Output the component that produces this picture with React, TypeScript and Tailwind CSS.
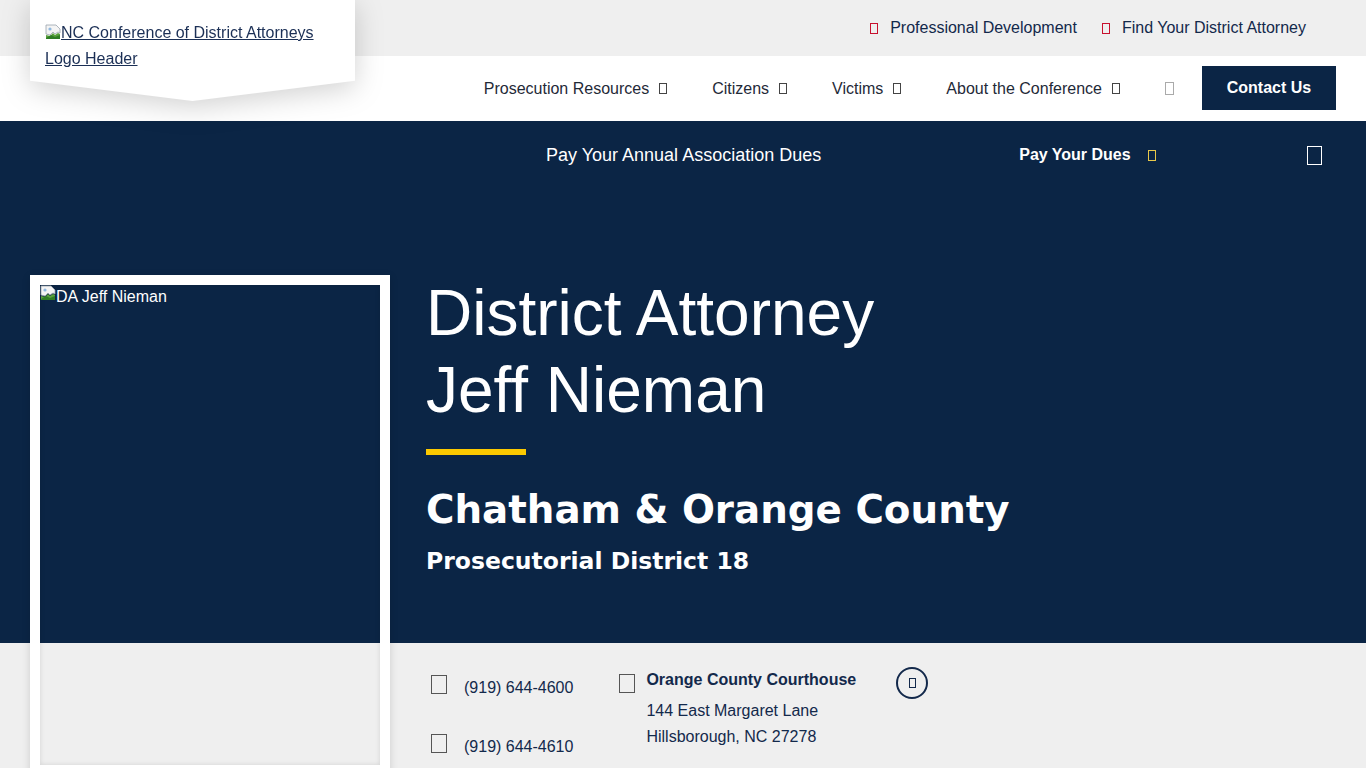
import React from 'react';

function Tofu({ className }: { className: string }) {
  return <span className={`inline-block shrink-0 border ${className}`} />;
}

function BrokenImg() {
  return (
    <svg viewBox="0 0 16 16" className="inline-block h-4 w-4 shrink-0 align-[-2px]">
      <path d="M1 1h10l4 4v4l-2-1-3 2-2-2-3 3-4-1z" fill="#f4f4f4" stroke="#9aa3ad" strokeWidth="0.8" />
      <path d="M1 11l4 1 3-3 2 2 3-2 2 1v5H1z" fill="#5aa13c" />
      <path d="M1 14l5-3 4 2 5-2v4H1z" fill="#2f7d24" />
      <circle cx="5" cy="5" r="1.6" fill="#8fb8e0" />
    </svg>
  );
}

function Logo() {
  return (
    <div className="absolute left-[30px] top-0 z-10 w-[325px] drop-shadow-[0_6px_14px_rgba(0,0,0,0.18)]">
      <div className="h-[101px] bg-white px-[15px] pt-[20px] [clip-path:polygon(0_0,100%_0,100%_80%,50%_100%,0_80%)]">
        <a href="#" className="text-[16px] leading-[26px] text-[#1b2f55] underline">
          <BrokenImg />
          NC Conference of District Attorneys Logo Header
        </a>
      </div>
    </div>
  );
}

function TopBar() {
  return (
    <div className="flex h-[56px] items-center justify-end gap-[25px] bg-[#efefef] pr-[60px] text-[16px] text-[#13294b]">
      <a href="#" className="flex items-center gap-[12px]">
        <Tofu className="h-[11px] w-[8px] border-[#c8102e]" />
        Professional Development
      </a>
      <a href="#" className="flex items-center gap-[12px]">
        <Tofu className="h-[11px] w-[8px] border-[#c8102e]" />
        Find Your District Attorney
      </a>
    </div>
  );
}

function NavBar() {
  const items = ['Prosecution Resources', 'Citizens', 'Victims', 'About the Conference'];
  return (
    <div className="flex h-[65px] items-center justify-end bg-white pr-[30px] text-[16px] text-[#1f2a38]">
      {items.map((t) => (
        <a key={t} href="#" className="mr-[45px] flex items-center gap-[10px]">
          {t}
          <Tofu className="h-[11px] w-[8px] border-[#444]" />
        </a>
      ))}
      <Tofu className="mr-[28px] h-[13px] w-[9px] border-[#aaa]" />
      <a
        href="#"
        className="-mt-[2px] flex h-[44px] w-[134px] items-center justify-center bg-[#0b2545] text-[16px] font-bold text-white"
      >
        Contact Us
      </a>
    </div>
  );
}

function PayBar() {
  return (
    <div className="flex h-[68px] items-center text-white">
      <div className="ml-[546px] text-[18px]">Pay Your Annual Association Dues</div>
      <a href="#" className="ml-[198px] flex items-center gap-[17px] text-[16px] font-bold">
        Pay Your Dues
        <Tofu className="h-[11px] w-[8px] border-[#e8c84a]" />
      </a>
      <Tofu className="ml-auto mr-[44px] h-[19px] w-[15px] border-white" />
    </div>
  );
}

function PhotoCard() {
  return (
    <div className="h-[500px] w-[360px] shrink-0 border-[10px] border-white shadow-[0_2px_8px_rgba(0,0,0,0.15)]">
      <div className="h-full w-full shadow-[inset_0_0_5px_rgba(0,0,0,0.12)]">
        <div className="flex items-start text-[16px] leading-[24px] text-white">
          <BrokenImg />
          <span>DA Jeff Nieman</span>
        </div>
      </div>
    </div>
  );
}

function Contacts() {
  return (
    <div className="flex pl-[5px] pt-[32px] text-[16px] text-[#13294b]">
      <div className="flex flex-col gap-[37px]">
        <div className="flex items-start gap-[17px]">
          <Tofu className="h-[19px] w-[16px] border-[#555]" />
          <span className="mt-[4px] leading-[18px]">(919) 644-4600</span>
        </div>
        <div className="flex items-start gap-[17px]">
          <Tofu className="h-[19px] w-[16px] border-[#555]" />
          <span className="mt-[4px] leading-[18px]">(919) 644-4610</span>
        </div>
      </div>
      <div className="ml-[46px] flex items-start gap-[11px]">
        <Tofu className="-mt-[1px] h-[19px] w-[16px] border-[#555]" />
        <div className="-mt-[8px] leading-[26px]">
          <div className="mb-[5px] font-bold">Orange County Courthouse</div>
          <div>144 East Margaret Lane</div>
          <div>Hillsborough, NC 27278</div>
        </div>
      </div>
      <div className="ml-[40px] -mt-[8px] flex h-[32px] w-[32px] items-center justify-center rounded-full border-2 border-[#13294b]">
        <Tofu className="h-[10px] w-[7px] border-[#13294b]" />
      </div>
    </div>
  );
}

export default function App() {
  return (
    <div className="min-h-[768px] overflow-hidden bg-[#efefef] font-['Liberation_Sans',Arial,sans-serif]">
      <header className="relative">
        <Logo />
        <TopBar />
        <NavBar />
      </header>
      <section className="bg-[linear-gradient(to_bottom,#0b2545_0,#0b2545_522px,#efefef_522px)]">
        <PayBar />
        <div className="mt-[86px] flex pl-[30px]">
          <PhotoCard />
          <div className="ml-[36px] flex-1">
            <div className="h-[368px] text-white">
              <h1 className="text-[64px] leading-[77px]">
                District Attorney
                <br />
                Jeff Nieman
              </h1>
              <div className="mt-[20px] h-[6px] w-[100px] bg-[#fcc900]" />
              <h2 className="mt-[32px] text-[38.8px] font-bold leading-[46px] [font-family:'DejaVu_Sans',sans-serif]">
                Chatham &amp; Orange County
              </h2>
              <h3 className="mt-[12px] text-[23.5px] font-bold leading-[32px] [font-family:'DejaVu_Sans',sans-serif]">
                Prosecutorial District 18
              </h3>
            </div>
            <Contacts />
          </div>
        </div>
      </section>
    </div>
  );
}
